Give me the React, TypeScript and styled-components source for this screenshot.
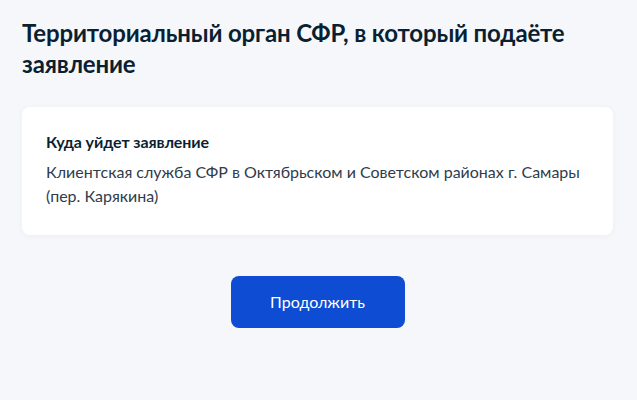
import { FC } from "react";
import styled, { createGlobalStyle } from "styled-components";

const GlobalStyle = createGlobalStyle`
  html, body {
    margin: 0;
    padding: 0;
    background: #f5f7fa;
  }
  body {
    font-family: Lato, "Noto Sans", sans-serif;
    color: #0b1f33;
  }
  * {
    box-sizing: border-box;
  }
`;

const App: FC = () => {
  return (
    <Page>
      <GlobalStyle />
      <Title>Территориальный орган СФР, в который подаёте заявление</Title>
      <Card>
        <CardLabel>Куда уйдет заявление</CardLabel>
        <CardText>
          Клиентская служба СФР в Октябрьском и Советском районах г. Самары
          (пер. Карякина)
        </CardText>
      </Card>
      <Actions>
        <PrimaryButton type="button">Продолжить</PrimaryButton>
      </Actions>
    </Page>
  );
};

export default App;

const Page = styled.div`
  min-height: 400px;
  padding: 17px 24px 0 22px;
  display: flex;
  flex-direction: column;
`;

const Title = styled.h1`
  margin: 0;
  font-size: 24px;
  line-height: 31px;
  font-weight: 700;
  letter-spacing: -0.15px;
  max-width: 560px;
`;

const Card = styled.div`
  margin-top: 28px;
  background: #ffffff;
  border-radius: 8px;
  box-shadow: 0 1px 4px rgba(232, 236, 241, 0.8);
  padding: 23px 24px 27px;
`;

const CardLabel = styled.div`
  font-size: 16px;
  line-height: 24px;
  font-weight: 700;
  letter-spacing: -0.1px;
`;

const CardText = styled.div`
  margin-top: 6px;
  font-size: 16px;
  line-height: 24px;
  font-weight: 400;
  color: #2f3c4c;
`;

const Actions = styled.div`
  display: flex;
  justify-content: center;
  margin-top: 41px;
`;

const PrimaryButton = styled.button`
  width: 174px;
  height: 52px;
  border: none;
  border-radius: 8px;
  background: #0d4cd3;
  color: #ffffff;
  font-family: Lato, "Noto Sans", sans-serif;
  font-size: 16px;
  line-height: 24px;
  cursor: pointer;
`;
